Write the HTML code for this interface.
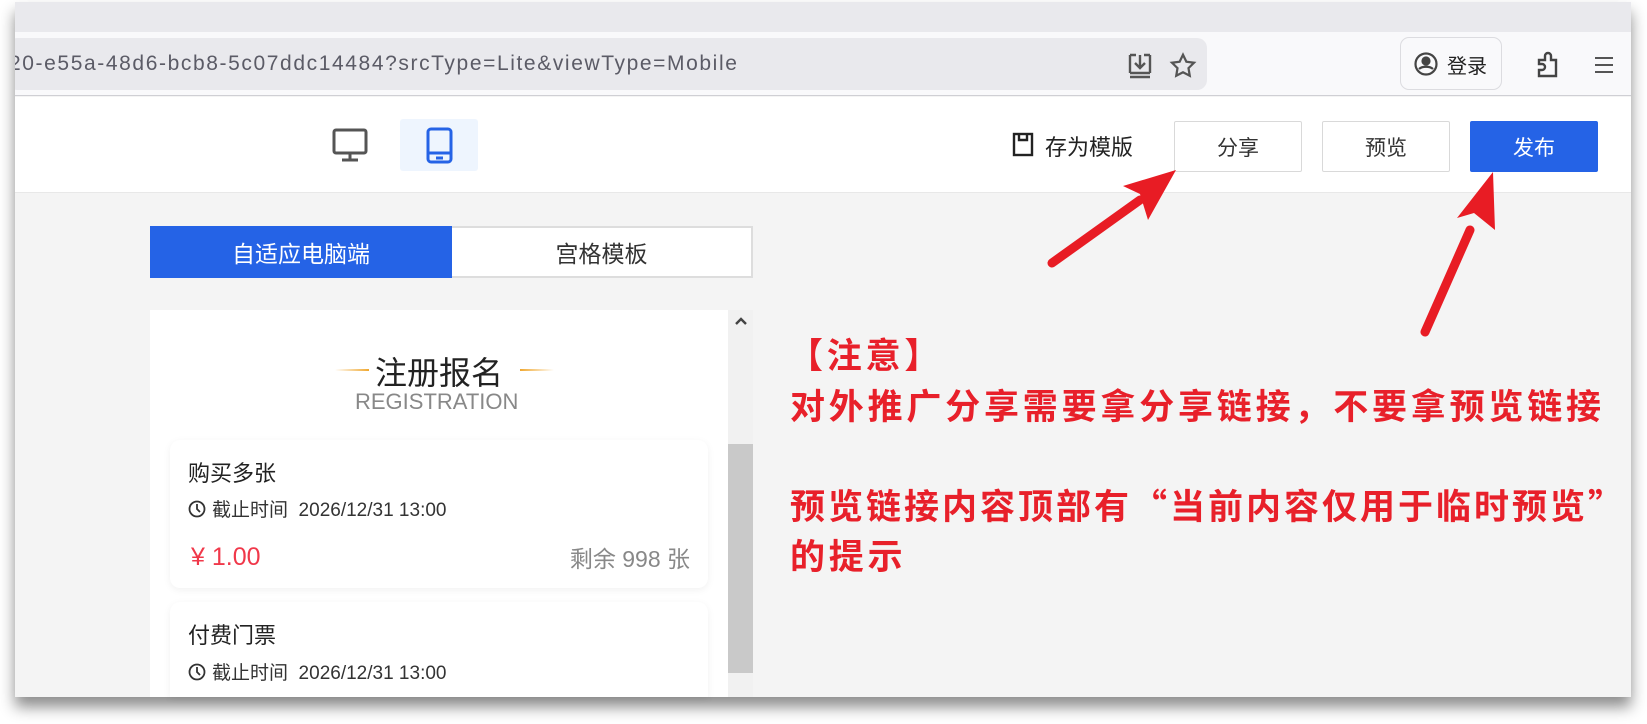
<!DOCTYPE html>
<html><head><meta charset="utf-8"><style>
*{margin:0;padding:0;box-sizing:border-box}
body{width:1647px;height:724px;background:#fff;position:relative;overflow:hidden;font-family:"Liberation Sans","Noto Sans CJK SC",sans-serif}
.a{position:absolute}
.win{left:15px;top:2px;width:1616px;height:695px;background:#f4f4f4;box-shadow:0 10px 14px rgba(0,0,0,.45);overflow:hidden}
.btn{position:absolute;top:119px;height:51px;width:128px;border:1px solid #d9d9d9;background:#fff;font-size:21px;color:#333;display:flex;align-items:center;justify-content:center;border-radius:2px}
.red{color:#e8202a;font-weight:bold;font-size:35px;letter-spacing:3.8px;white-space:nowrap;font-family:"Noto Sans CJK SC",sans-serif}
.card{position:absolute;left:170px;width:538px;background:#fff;border-radius:10px;box-shadow:0 2px 8px rgba(0,0,0,.06)}
.dl{font-size:19px;color:#333;white-space:nowrap;display:flex;align-items:center}
</style></head><body>
<div class="a win">
  <div class="a" style="left:0;top:0;width:1616px;height:30px;background:#e9e9ed"></div>
  <div class="a" style="left:0;top:30px;width:1616px;height:64px;background:#f9f9fb;border-bottom:1px solid #cfcfd4"></div>
  <div class="a" style="left:-8px;top:36px;width:1200px;height:52px;background:#e9e9ed;border-radius:10px"></div>
  <div class="a" style="left:-6px;top:50px;font-size:21px;color:#5b5b66;letter-spacing:1.6px;white-space:nowrap">20-e55a-48d6-bcb8-5c07ddc14484?srcType=Lite&amp;viewType=Mobile</div>
  <svg class="a" style="left:1110px;top:49px" width="30" height="30" viewBox="0 0 30 30" fill="none" stroke="#555" stroke-width="2.4"><path d="M5 4h6M19 4h6M5 4v18M25 4v18M5 22h20M5 26h20M15 4v12M10 12l5 5 5-5"/></svg>
  <svg class="a" style="left:1153px;top:49px" width="30" height="30" viewBox="0 0 24 24" fill="none" stroke="#555" stroke-width="1.8"><path d="M12 3l2.7 5.6 6.1.8-4.4 4.3 1 6.1L12 17l-5.4 2.8 1-6.1L3.2 9.4l6.1-.8z"/></svg>
  <div class="a" style="left:1385px;top:35px;width:102px;height:53px;border:1px solid #dcdce0;border-radius:9px;background:#f9f9fb"></div>
  <svg class="a" style="left:1398px;top:49px" width="26" height="26" viewBox="0 0 26 26" fill="none" stroke="#444" stroke-width="2.2"><circle cx="13" cy="13" r="10.5"/><circle cx="13" cy="10" r="3.5" fill="#444"/><path d="M6 18c3-3 11-3 14 0" /></svg>
  <div class="a" style="left:1432px;top:48px;font-size:20px;color:#222">登录</div>
  <svg class="a" style="left:1520px;top:48px" width="26" height="30" viewBox="0 0 26 30" fill="none" stroke="#444" stroke-width="2.4"><path d="M4 10h6V6a3 3 0 016 0v4h5v16H4v-6h3a3 3 0 000-6H4z"/></svg>
  <svg class="a" style="left:1578px;top:53px" width="22" height="20" viewBox="0 0 22 20" stroke="#555" stroke-width="2"><path d="M2 3h18M2 10h18M2 17h18"/></svg>
  <div class="a" style="left:0;top:95px;width:1616px;height:96px;background:#fff;border-bottom:1px solid #e8e8e8"></div>
  <svg class="a" style="left:317px;top:126px" width="36" height="35" viewBox="0 0 36 35" fill="none" stroke="#555" stroke-width="3"><rect x="2" y="2" width="32" height="23" rx="2"/><path d="M18 25v7M10 32h16"/></svg>
  <div class="a" style="left:385px;top:117px;width:78px;height:52px;background:#eef5fe;border-radius:3px"></div>
  <svg class="a" style="left:411px;top:125px" width="27" height="37" viewBox="0 0 27 37" fill="none" stroke="#2563e6" stroke-width="3"><rect x="2" y="2" width="23" height="33" rx="3"/><path d="M2 26h23M10 31h7"/></svg>
  <svg class="a" style="left:997px;top:130px" width="22" height="25" viewBox="0 0 22 25" fill="none" stroke="#222" stroke-width="2.4"><rect x="2" y="2" width="18" height="21"/><path d="M7 2v6h8V2"/></svg>
  <div class="a" style="left:1030px;top:128px;font-size:22px;color:#222">存为模版</div>
  <div class="btn" style="left:1159px">分享</div>
  <div class="btn" style="left:1307px">预览</div>
  <div class="btn" style="left:1455px;background:#2563e6;border-color:#2563e6;color:#fff">发布</div>
  <div class="a" style="left:135px;top:224px;width:302px;height:52px;background:#2563e6;color:#fff;font-size:23px;display:flex;align-items:center;justify-content:center">自适应电脑端</div>
  <div class="a" style="left:437px;top:224px;width:301px;height:52px;background:#fff;border:2px solid #ddd;border-left:none;color:#333;font-size:23px;display:flex;align-items:center;justify-content:center">宫格模板</div>
  <div class="a" style="left:135px;top:308px;width:578px;height:400px;background:#fff"></div>
  <div class="a" style="left:713px;top:308px;width:25px;height:400px;background:#f1f1f1"></div>
  <div class="a" style="left:713px;top:442px;width:25px;height:229px;background:#c9c9c9"></div>
  <svg class="a" style="left:719px;top:314px" width="14" height="10" viewBox="0 0 14 10" fill="none" stroke="#444" stroke-width="2.4"><path d="M2 8l5-5 5 5"/></svg>
  <div class="a" style="left:320px;top:367px;width:34px;height:1.5px;background:linear-gradient(90deg,#fff,#f0a830)"></div>
  <div class="a" style="left:505px;top:367px;width:34px;height:1.5px;background:linear-gradient(90deg,#f0a830,#fff)"></div>
  <div class="a" style="left:360px;top:346px;font-size:32px;color:#222">注册报名</div>
  <div class="a" style="left:340px;top:387px;font-size:22px;color:#888">REGISTRATION</div>
</div>
<div class="card" style="top:440px;height:148px"></div>
<div class="a" style="left:188px;top:456px;font-size:22px;color:#222">购买多张</div>
<div class="a dl" style="left:188px;top:495px"><svg width="18" height="18" viewBox="0 0 18 18" fill="none" stroke="#333" stroke-width="1.8" style="margin-right:6px"><circle cx="9" cy="9" r="7.5"/><path d="M9 4v5l3 3"/></svg>截止时间&nbsp; 2026/12/31 13:00</div>
<div class="a" style="left:191px;top:543px;font-size:25px;color:#f0384a">¥ 1.00</div>
<div class="a" style="right:957px;top:540px;font-size:23px;color:#888;white-space:nowrap">剩余 998 张</div>
<div class="card" style="top:602px;height:95px;border-radius:10px 10px 0 0"></div>
<div class="a" style="left:188px;top:618px;font-size:22px;color:#222">付费门票</div>
<div class="a dl" style="left:188px;top:658px"><svg width="18" height="18" viewBox="0 0 18 18" fill="none" stroke="#333" stroke-width="1.8" style="margin-right:6px"><circle cx="9" cy="9" r="7.5"/><path d="M9 4v5l3 3"/></svg>截止时间&nbsp; 2026/12/31 13:00</div>
<div class="a red" style="left:788px;top:328px">【注意】</div>
<div class="a red" style="left:790px;top:379px">对外推广分享需要拿分享链接，不要拿预览链接</div>
<div class="a red" style="left:790px;top:479px;letter-spacing:3.0px">预览链接内容顶部有“当前内容仅用于临时预览”</div>
<div class="a red" style="left:790px;top:529px">的提示</div>
<svg class="a" style="left:0;top:0" width="1647" height="724" viewBox="0 0 1647 724">
  <g stroke="#e81c24" stroke-width="9" stroke-linecap="round" fill="#e81c24">
    <path d="M1052 263L1140 200"/>
    <path d="M1425 332L1470 230"/>
  </g>
  <path d="M1176 170L1123 186L1140 194L1148 220Z" fill="#e81c24"/>
  <path d="M1493 172L1457 218L1474 213L1495 230Z" fill="#e81c24"/>
</svg>
</body></html>
